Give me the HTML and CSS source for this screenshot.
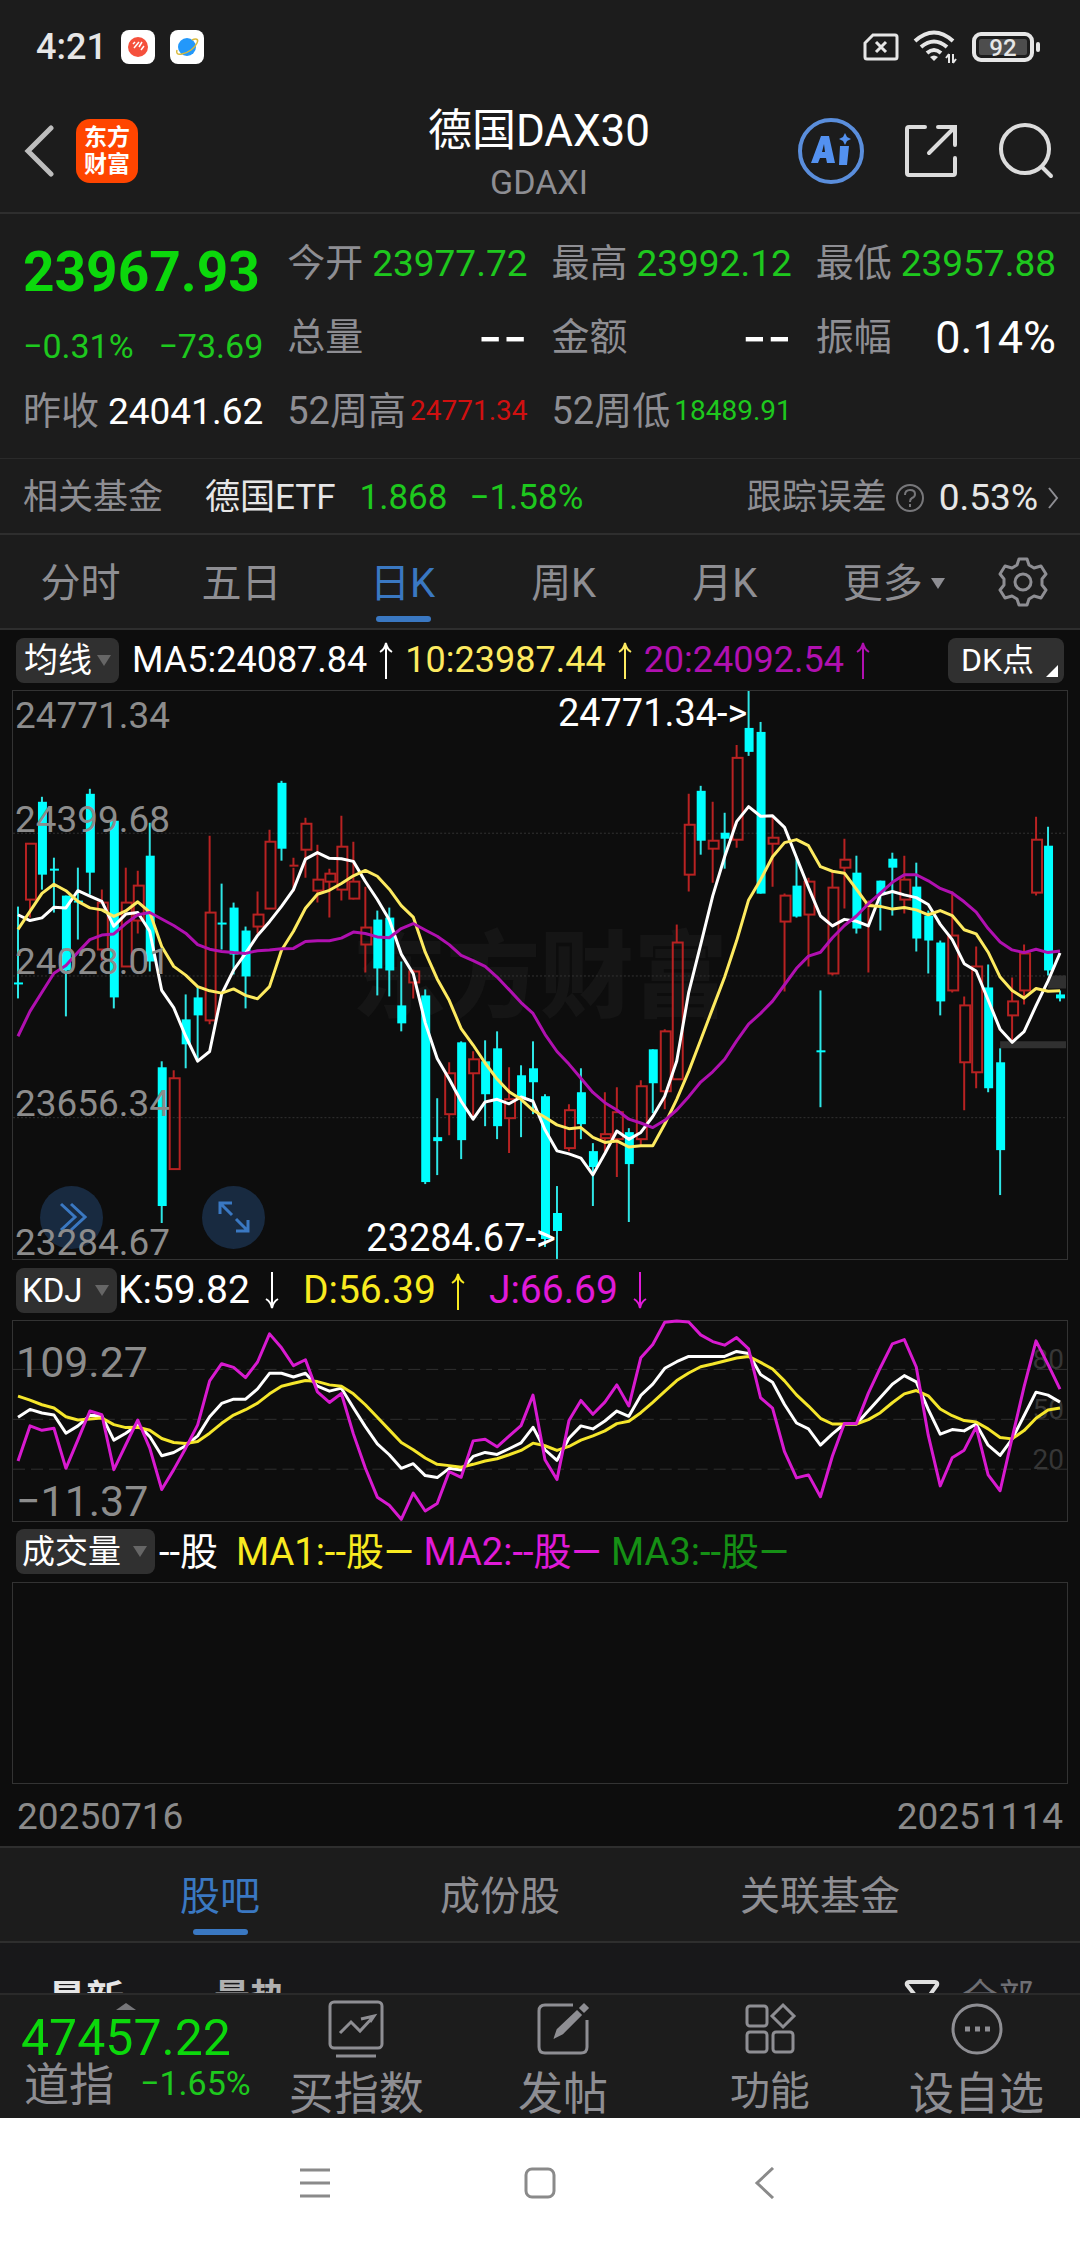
FILE: index.html
```html
<!DOCTYPE html>
<html lang="zh-CN">
<head>
<meta charset="utf-8">
<meta name="viewport" content="width=device-width">
<title>德国DAX30</title>
<link rel="stylesheet" href="styles.css">
<script src="chart.js" defer></script>
</head>
<body>
<!-- 状态栏 -->
<div class="status">
	<span class="time">4:21</span>
	<svg class="app" width="34" height="34" viewBox="0 0 34 34"><rect width="34" height="34" rx="8" fill="#fff"/><circle cx="17" cy="17" r="10" fill="#f5503c"/><path d="M12 14l2-2M13 18l5-6M18 17l3-5M20 20l3-4" fill="none" stroke="#fff" stroke-width="1.5"/></svg>
	<svg class="app" width="34" height="34" viewBox="0 0 34 34"><rect width="34" height="34" rx="8" fill="#fff"/><circle cx="17" cy="17" r="9" fill="#2398fa"/><path d="M22 10c4-2 7-1 5 3-2 5-9 10-15 11-5 1-6-1-5-4" fill="none" stroke="#d8b93c" stroke-width="1.5"/></svg>
	<span class="grow"></span>
	<svg width="36" height="28" viewBox="0 0 36 28" fill="none" stroke="#e6e6e6" stroke-width="3"><path d="M10 2h22q2 0 2 2v20q0 2-2 2H4q-2 0-2-2V10z"/><path d="M13 9l10 10M23 9L13 19"/></svg>
	<svg width="44" height="34" viewBox="0 0 44 34" fill="none" stroke="#e6e6e6" stroke-width="4"><path d="M2 11q19-17 38 0M8 17q13-11 26 0M14 23q7-6 14 0"/><path d="M17 27q4-3 8 0l-4 4z" fill="#e6e6e6" stroke="none"/><path d="M36 24v9M33 28l3-4M40 24v9M43 29l-3 4" stroke-width="2"/></svg>
	<span class="battery">92</span>
</div>
<!-- 标题栏 -->
<header class="head">
	<div class="head-side">
		<button class="ico" aria-label="返回"><svg width="30" height="52" viewBox="0 0 30 52" fill="none" stroke="#bdbdbd" stroke-width="5" stroke-linecap="round"><path d="M27 3L4 26l23 23"/></svg></button>
		<a class="logo" href="#">东方<br>财富</a>
	</div>
	<div class="head-title">
		<h1>德国DAX30</h1>
		<p>GDAXI</p>
	</div>
	<div class="head-side head-right">
		<button class="ico" aria-label="Ai"><svg width="66" height="66" viewBox="0 0 66 66"><circle cx="33" cy="33" r="31" fill="none" stroke="#5a8edc" stroke-width="4"/><path d="M13 45L23 18h8l6 27h-8l-1-5h-6l-2 5zM24 34h3l-1-8zM42 28h9l-2 19h-8zM47 15l2 4 4 2-4 2-2 4-2-4-4-2 4-2z" fill="#5391f0" fill-rule="evenodd"/></svg></button>
		<button class="ico" aria-label="分享"><svg width="54" height="54" viewBox="0 0 54 54" fill="none" stroke="#dcdcdc" stroke-width="4" stroke-linecap="round"><path d="M21 3H5q-2 0-2 2v44q0 2 2 2h44q2 0 2-2V34M34 3h17v18M50 4L25 29"/></svg></button>
		<button class="ico" aria-label="搜索"><svg width="56" height="56" viewBox="0 0 56 56" fill="none" stroke="#dcdcdc" stroke-width="4" stroke-linecap="round"><circle cx="27" cy="26" r="24"/><path d="M44 44l9 9"/></svg></button>
	</div>
</header>
<!-- 行情 -->
<section class="quote">
	<div class="price"><b>23967.93</b></div>
	<div><span>今开</span><i class="down">23977.72</i></div>
	<div><span>最高</span><i class="down">23992.12</i></div>
	<div><span>最低</span><i class="down">23957.88</i></div>
	<div class="change"><em>−0.31%</em><em>−73.69</em></div>
	<div><span>总量</span><i class="none">--</i></div>
	<div><span>金额</span><i class="none">--</i></div>
	<div><span>振幅</span><i class="big">0.14%</i></div>
	<div><span>昨收</span><i>24041.62</i></div>
	<div><span>52周高</span><i class="small up">24771.34</i></div>
	<div><span>52周低</span><i class="small down">18489.91</i></div>
</section>
<a class="fund" href="#">
	<span class="gray">相关基金</span>
	<span class="fund-name">德国ETF</span>
	<span class="down fund-price">1.868</span>
	<span class="down">−1.58%</span>
	<span class="grow"></span>
	<span class="gray">跟踪误差</span>
	<svg class="help" width="30" height="30" viewBox="0 0 30 30" fill="none" stroke="#77777a" stroke-width="2"><circle cx="15" cy="15" r="13"/><path d="M10 12q0-5 5-5t5 4q0 3-3 4-2 1-2 4M15 21v3"/></svg>
	<span class="fund-diff">0.53%</span>
	<svg width="14" height="22" viewBox="0 0 14 22" fill="none" stroke="#8e8e93" stroke-width="2"><path d="M3 1l8 10-8 10"/></svg>
</a>
<nav class="tabs">
	<button>分时</button>
	<button>五日</button>
	<button class="on">日K</button>
	<button>周K</button>
	<button>月K</button>
	<button class="more">更多<small class="caret"></small></button>
	<button class="gear" aria-label="设置"><svg width="50" height="50" viewBox="0 0 50 50" fill="none" stroke="#8e8e93" stroke-width="3" stroke-linejoin="round"><path d="M21 2h8l2 6 5 3 7-2 5 8-4 5v6l4 5-5 8-7-2-5 3-2 6h-8l-2-6-5-3-7 2-5-8 4-5v-6l-4-5 5-8 7 2 5-3z"/><circle cx="25" cy="25" r="8"/></svg></button>
</nav>
<!-- 图表 -->
<main class="charts">
	<div class="legend">
		<button class="pick">均线<small class="caret"></small></button>
		<span class="ma5">MA5:24087.84<svg class="arrow" viewBox="0 0 16 38"><path d="M8 38V2M2 11q5-3 6-9 1 6 6 9"/></svg></span>
		<span class="ma10">10:23987.44<svg class="arrow" viewBox="0 0 16 38"><path d="M8 38V2M2 11q5-3 6-9 1 6 6 9"/></svg></span>
		<span class="ma20">20:24092.54<svg class="arrow" viewBox="0 0 16 38"><path d="M8 38V2M2 11q5-3 6-9 1 6 6 9"/></svg></span>
		<span class="grow"></span>
		<button class="pick dk">DK点</button>
	</div>
	<div class="frame">
		<button class="round next" aria-label="展开"><svg width="30" height="30" viewBox="0 0 30 30"><path d="M4 2l14 13L4 28M14 2l14 13-14 13"/></svg></button>
		<button class="round full" aria-label="全屏"><svg width="34" height="34" viewBox="0 0 34 34"><path d="M3 14V3h12M3 3l12 12M31 20v11H19M31 31L19 19"/></svg></button>
		<svg id="kline" viewBox="0 0 1056 569">
			<text class="mark" x="528" y="320">东方财富</text>
			<path class="dots" d="M0 142.500H1056M0 285.500H1056M0 427.500H1056"/>
			<path class="gap" d="M989 351h66v7h-66zM1037 285h18v13h-18z"/>
			<g id="bars"></g>
			<text class="axis" x="2" y="37">24771.34</text>
			<text class="axis" x="2" y="141">24399.68</text>
			<text class="axis" x="2" y="284">24028.01</text>
			<text class="axis" x="2" y="426">23656.34</text>
			<text class="axis" x="2" y="565">23284.67</text>
			<text class="tip" x="546" y="35">24771.34-&gt;</text>
			<text class="tip" x="354" y="561">23284.67-&gt;</text>
		</svg>
	</div>
	<div class="legend kdj-legend">
		<button class="pick">KDJ<small class="caret"></small></button>
		<span class="k">K:59.82<svg class="arrow" viewBox="0 0 16 38"><path d="M8 0v36M2 27q5 3 6 9 1-6 6-9"/></svg></span>
		<span class="d">D:56.39<svg class="arrow" viewBox="0 0 16 38"><path d="M8 38V2M2 11q5-3 6-9 1 6 6 9"/></svg></span>
		<span class="j">J:66.69<svg class="arrow" viewBox="0 0 16 38"><path d="M8 0v36M2 27q5 3 6 9 1-6 6-9"/></svg></span>
	</div>
	<div class="frame">
		<svg id="kdj" viewBox="0 0 1056 200">
			<path class="dash" d="M0 48.500H1056M0 98.500H1056M0 148.500H1056"/>
			<text class="axis kdj-axis" x="3" y="56">109.27</text>
			<text class="axis kdj-axis" x="3" y="195">−11.37</text>
			<text class="level" x="1053" y="48">80</text>
			<text class="level" x="1053" y="98">50</text>
			<text class="level" x="1053" y="148">20</text>
		</svg>
	</div>
	<div class="legend vol-legend">
		<button class="pick">成交量<small class="caret"></small></button>
		<span class="vol">--股</span>
		<span class="d">MA1:--股—</span>
		<span class="j">MA2:--股—</span>
		<span class="m3">MA3:--股—</span>
	</div>
	<div class="frame volume"></div>
	<div class="dates"><time>20250716</time><time>20251114</time></div>
</main>
<nav class="subtabs">
	<button class="on">股吧</button>
	<button>成份股</button>
	<button>关联基金</button>
</nav>
<div class="posts">
	<b>最新</b>
	<b class="hot">最热</b>
	<span class="grow"></span>
	<svg width="36" height="36" viewBox="0 0 36 36" fill="none" stroke="#e0e0e0" stroke-width="4"><path d="M5 2h26q3 0 2 3L23 19v14l-9-4V19L3 5q-1-3 2-3z"/></svg>
	<span class="all">全部</span>
</div>
<!-- 底部工具栏 -->
<footer class="toolbar">
	<a class="dow" href="#">
		<small class="caret caret-up"></small>
		<strong>47457.22</strong>
		<div><span>道指</span><em>−1.65%</em></div>
	</a>
	<button><svg viewBox="0 0 58 58"><rect x="3" y="2" width="52" height="46" rx="4"/><path d="M9 56h40M13 33l11-11 9 9 14-15M34 19l13-3-4 6"/></svg>买指数</button>
	<button><svg viewBox="0 0 58 58"><path d="M39 5H11q-6 0-6 6v36q0 6 6 6h36q6 0 6-6V20"/><path d="M22 36l2-6L43 12l3 3-18 18zM47 8l3-3 3 3-3 3z" fill="#8e8e93"/></svg>发帖</button>
	<button class="fn"><svg viewBox="0 0 58 58"><rect x="6" y="6" width="20" height="20" rx="3"/><rect x="6" y="32" width="20" height="20" rx="3"/><rect x="32" y="32" width="20" height="20" rx="3"/><path d="M42 5l11 11-11 11-11-11z"/></svg>功能</button>
	<button><svg viewBox="0 0 58 58"><circle cx="29" cy="29" r="24"/><path d="M17 29h5M27 29h5M37 29h5" stroke-width="5"/></svg>设自选</button>
</footer>
<!-- 系统导航 -->
<nav class="sysnav">
	<button aria-label="菜单"><svg width="32" height="32" viewBox="0 0 32 32"><path d="M1 3h30M1 16h30M1 29h30"/></svg></button>
	<button aria-label="主页"><svg width="32" height="32" viewBox="0 0 32 32"><rect x="2" y="2" width="28" height="28" rx="6"/></svg></button>
	<button aria-label="后退"><svg width="32" height="32" viewBox="0 0 32 32"><path d="M24 1L8 16l16 15"/></svg></button>
</nav>
</body>
</html>
```
FILE: chart.js
```js
//K线数据: 涨跌,最高,实体上,实体下,最低 (纵向刻度26-1513)
var bars=[
	['d',590,788,788,830],['u',425,425,572,620],['d',304,315,508,545],['d',463,490,490,606],
	['d',562,562,757,878],['d',488,575,575,677],['d',283,295,502,560],['u',546,580,702,732],
	['d',353,367,827,857],['u',489,580,748,748],['u',497,535,628,660],['d',370,458,733,760],
	['d',996,1012,1374,1418],['u',1018,1040,1278,1278],['d',820,885,952,1014],['d',800,827,875,990],
	['u',406,605,888,898],['d',530,633,633,702],['d',580,592,715,768],['d',643,652,773,858],
	['u',550,612,643,660],['u',390,420,595,595],['d',262,267,438,470],['u',462,484,484,550],
	['u',358,374,442,515],['u',429,520,548,580],['u',492,504,525,618],['u',353,434,545,575],
	['u',421,525,570,573],['u',537,646,690,762],['d',600,625,753,822],['d',592,618,758,826],
	['d',735,850,896,916],['u',755,760,788,830],['d',808,823,1312,1316],['d',1093,1193,1204,1294],
	['u',999,1028,1135,1188],['d',943,947,1201,1252],['u',969,990,1028,1140],['d',940,996,1081,1166],
	['d',916,962,1166,1200],['u',1012,1095,1145,1236],['d',1006,1032,1095,1194],['d',943,1014,1050,1135],
	['d',1083,1087,1460,1482],['d',1323,1393,1440,1513],['u',1109,1124,1224,1232],['d',1015,1077,1160,1200],
	['d',1211,1232,1272,1375],['u',1077,1186,1196,1230],['u',1063,1130,1200,1300],['d',1171,1180,1265,1415],
	['u',1045,1060,1200,1215],['d',963,963,1053,1132],['u',912,918,1075,1122],['u',637,685,1043,1043],
	['u',296,376,506,550],['d',274,287,419,455],['u',315,419,440,528],['d',345,398,412,490],
	['u',167,200,416,437],['d',26,123,186,195],['d',107,133,557,557],['u',350,409,426,537],
	['u',557,561,630,812],['d',460,535,617,619],['u',516,525,611,746],['d',811,968,968,1115],
	['u',500,540,765,771],['u',414,467,488,597],['d',456,502,647,660],['u',575,586,586,763],
	['d',522,522,560,653],['d',449,465,489,613],['u',458,520,572,610],['d',476,538,673,708],
	['d',600,615,679,765],['d',680,685,840,875],['u',550,666,811,815],['u',825,850,998,1124],
	['u',696,748,1025,1066],['d',741,803,1065,1077],['d',962,997,1228,1346],['u',776,838,875,943],
	['u',690,713,810,847],['u',356,416,553,563],['d',382,431,757,770],['d',809,821,831,840]
];
//均线
var ma5=[612,627,620,592,594,549,563,577,642,610,606,655,810,855,930,995,970,820,757,713,666,630,590,546,466,449,464,465,472,525,572,625,715,766,895,988,1042,1100,1147,1102,1095,1107,1089,1100,1175,1230,1238,1249,1293,1237,1178,1200,1182,1140,1087,995,815,690,563,460,368,329,354,353,383,462,540,615,641,624,629,641,560,551,560,567,585,637,677,740,759,835,912,946,918,850,785,712];
var ma10=[650,603,556,532,549,577,594,599,616,602,578,605,695,747,770,800,811,817,806,823,832,800,705,655,595,558,548,530,510,496,511,545,588,618,710,780,836,910,953,1000,1042,1075,1095,1124,1142,1162,1172,1169,1195,1208,1204,1220,1217,1217,1160,1095,1022,940,857,775,680,573,520,460,423,415,431,486,498,503,545,588,590,597,593,599,612,601,614,651,662,710,775,810,830,805,812,811];
var ma20=[930,865,815,765,745,710,677,665,662,635,612,606,623,640,660,690,702,708,711,713,706,704,701,700,682,680,680,673,657,661,670,672,648,635,652,668,690,718,732,747,775,808,842,870,925,970,1003,1040,1077,1104,1123,1147,1157,1169,1150,1123,1088,1050,1023,990,942,898,870,838,795,752,720,710,672,640,615,583,555,527,507,507,523,543,555,578,605,648,683,704,711,702,711,707];
//KDJ (纵向刻度211-814)
var k=[502,478,489,495,550,528,496,498,571,550,524,560,618,608,588,558,500,460,447,447,416,369,369,380,369,408,423,414,473,530,582,615,656,642,678,684,656,661,620,608,614,597,579,532,600,632,565,528,537,513,483,499,436,402,354,334,318,318,318,318,303,309,373,396,463,519,537,586,552,522,522,482,442,402,376,395,478,553,539,543,522,586,617,568,497,426,435,456];
var d=[438,450,464,474,500,510,507,504,524,533,532,541,566,578,581,575,550,520,495,479,459,431,408,399,391,394,404,408,431,464,502,540,578,600,625,644,648,653,644,634,627,615,602,580,588,602,590,571,558,543,521,514,488,457,424,391,368,349,341,332,323,318,336,356,392,434,468,505,522,522,522,509,488,458,431,421,437,477,497,512,516,537,563,567,542,505,480,474];
var j=[634,528,541,535,656,570,483,494,660,585,510,595,720,660,595,525,392,340,351,382,335,250,292,346,328,425,457,430,552,655,743,768,810,731,785,762,666,683,573,568,591,559,527,435,630,690,512,451,493,456,404,468,322,282,215,211,214,253,273,284,261,295,443,474,606,685,676,742,619,521,521,429,352,280,267,350,556,709,624,601,531,676,724,565,410,271,342,417];

var NS='http://www.w3.org/2000/svg';
function add(parent,tag,attrs){
	var el=document.createElementNS(NS,tag);
	for(var a in attrs){
		el.setAttribute(a,attrs[a]);
	}
	parent.appendChild(el);
}
function px(i){
	return 5+i*12;
}
function drawLine(parent,data,cls,top,bottom,h){
	var pts=[];
	for(var i=0;i<data.length;i++){
		pts.push(px(i)+','+Math.round((data[i]-top)/(bottom-top)*h*10)/10);
	}
	add(parent,'polyline',{'points':pts.join(' '),'class':cls});
}
function ky(v){
	return Math.round((v-26)/1487*569);
}
var g=document.getElementById('bars');
for(var i=0;i<bars.length;i++){
	var b=bars[i],x=px(i),t=ky(b[2]),e=Math.max(ky(b[3]),t+2);
	if(b[0]=='d'){
		add(g,'path',{'class':'fall','d':'M'+x+' '+ky(b[1])+'V'+ky(b[4])});
		add(g,'rect',{'class':'fall-body','x':x-4,'y':t,'width':9,'height':e-t});
	}else{
		//阳线空心
		add(g,'path',{'class':'rise','d':'M'+x+' '+ky(b[1])+'V'+t+'M'+x+' '+e+'V'+ky(b[4])});
		if(b[2]==b[3]){
			add(g,'path',{'class':'rise','d':'M'+(x-4)+' '+t+'h9'});
		}else{
			add(g,'rect',{'class':'rise','x':x-4,'y':t,'width':10,'height':e-t});
		}
	}
}
drawLine(g,ma5,'line-w',26,1513,569);
drawLine(g,ma10,'line-y',26,1513,569);
drawLine(g,ma20,'line-p',26,1513,569);
var kdj=document.getElementById('kdj');
drawLine(kdj,k,'line-w',211,814,200);
drawLine(kdj,d,'line-y2',211,814,200);
drawLine(kdj,j,'line-j',211,814,200);
```
FILE: styles.css
```css
*{margin:0;padding:0;box-sizing:border-box;}
body{background:#1c1c1c;color:#fff;font-family:Roboto,"Noto Sans CJK SC",sans-serif;font-size:36px;line-height:1;}
button{border:0;background:none;color:inherit;font:inherit;}
a{color:inherit;text-decoration:none;}
i,em{font-style:normal;}
svg{display:block;flex:none;}
.grow{flex:1;}
.gray{color:#8e8e93;}
.down{color:#1ec81e !important;}
.up{color:#d01010 !important;}
.caret{display:inline-block;flex:none;border:7px solid transparent;border-top:11px solid #8e8e93;border-bottom:0;}

.status{display:flex;align-items:center;height:94px;padding:0 46px 0 36px;}
.time{font-size:36px;font-weight:500;color:#e6e6e6;margin-right:14px;}
.status .app{margin-right:15px;}
.status svg+svg{margin-right:15px;}
.status .grow+svg{margin-right:14px;}
.battery{position:relative;width:62px;height:30px;border:4px solid #e6e6e6;border-radius:9px;background:#4d4d4d;box-shadow:inset 0 0 0 3px #1c1c1c;font-size:24px;line-height:24px;font-weight:500;text-align:center;color:#e6e6e6;}
.battery:after{content:"";position:absolute;right:-10px;top:6px;width:4px;height:10px;border-radius:2px;background:#e6e6e6;}

.head{display:grid;grid-template-columns:1fr auto 1fr;height:120px;padding:0 26px 0 24px;border-bottom:2px solid #2e2e2e;}
.head-side{display:flex;align-items:center;gap:22px;padding-bottom:4px;}
.head-right{justify-content:flex-end;gap:40px;}
.logo{width:62px;height:64px;padding-top:5px;border-radius:14px;background:#ff4500;font-size:23px;line-height:27px;font-weight:700;text-align:center;}
.head-title{text-align:center;padding-top:12px;}
.head h1{font-size:44px;line-height:50px;font-weight:400;}
.head p{font-size:34px;line-height:52px;color:#8e8e93;}

.quote{display:grid;grid-template-columns:repeat(4,1fr);grid-auto-rows:74px;column-gap:24px;padding:12px 24px 10px 23px;border-bottom:1px solid #2a2a2a;}
.quote div{display:flex;align-items:center;justify-content:space-between;white-space:nowrap;}
.quote span{font-size:38px;color:#8e8e93;}
.quote i{font-size:37px;}
.quote .big{font-size:45px;}
.quote .none{font-family:Inter,sans-serif;font-size:54px;}
.quote .small{font-size:28px;}
.quote b{font-size:55px;font-weight:700;color:#0cd80c;}
.quote .price,.quote .change{padding-top:18px;}
.quote em{font-size:34px;color:#1ec81e;}

.fund{display:flex;align-items:center;height:76px;padding:3px 20px 0 23px;border-bottom:2px solid #2e2e2e;font-size:35px;color:#e6e6e6;}
.fund-name{margin:0 24px 0 42px;}
.fund-price{margin-right:22px;}
.fund-diff{margin-right:8px;font-size:37px;}
.help{margin:0 14px 0 8px;}

.tabs{display:grid;grid-template-columns:repeat(6,17fr) 12fr;height:95px;border-bottom:2px solid #2e2e2e;}
.tabs button,.subtabs button{position:relative;padding-top:5px;font-size:40px;color:#8e8e93;}
.tabs .more{padding-left:16px;}
.tabs .caret{margin:0 0 8px 8px;}
.tabs .on,.subtabs .on{color:#3a78c2;}
.on:after{content:"";position:absolute;left:50%;bottom:6px;width:55px;height:6px;margin-left:-27px;border-radius:3px;background:#3a78c2;}
.tabs .gear{display:flex;align-items:center;justify-content:center;padding-top:0;}

.charts{background:#0d0d0d;padding:0 12px;border-bottom:2px solid #2e2e2e;}
.legend{display:flex;align-items:center;height:60px;padding:0 4px;font-size:36px;white-space:nowrap;}
.legend span{display:flex;align-items:center;}
.pick{display:flex;align-items:center;width:103px;height:45px;padding:0 8px;border-radius:8px;background:#303030;font-size:34px;}
.pick .caret{border-top-color:#666;margin-left:auto;}
.arrow{width:16px;height:38px;margin:0 11px;fill:none;stroke:currentColor;stroke-width:2;}
.ma5{margin-left:13px;}
.ma10{color:#fdea60;}
.ma20{color:#b010b0;}
.dk{position:relative;width:116px;padding-left:13px;font-size:32px;}
.dk:after{content:"";position:absolute;right:6px;bottom:6px;border:6px solid #fff;border-top-color:transparent;border-left-color:transparent;}
.frame{position:relative;border:1px solid #333;}
.frame>svg{position:relative;width:100%;height:auto;overflow:visible;pointer-events:none;}
.volume{height:202px;}
.round{position:absolute;bottom:10px;display:flex;align-items:center;justify-content:center;width:63px;height:63px;border-radius:50%;background:#182a40;}
.round path{fill:none;stroke:#3a78c2;stroke-width:3;}
.next{left:27px;}
.full{left:189px;}
.mark{font-size:94px;font-weight:900;fill:#151515;text-anchor:middle;}
.dots{stroke:#333;stroke-dasharray:2 2;}
.dash{stroke:#303030;stroke-dasharray:12 6;}
.gap{fill:#303030;}
.axis{font-size:37px;fill:#8c8c8c;}
.tip{font-size:38px;fill:#fff;}
.kdj-axis{font-size:43px;}
.level{font-size:28px;fill:#363636;text-anchor:end;}
.fall{stroke:#2ee6e6;stroke-width:2;}
.fall-body{fill:#00ffff;}
.rise{fill:none;stroke:#b82222;stroke-width:2;}
.line-w,.line-y,.line-y2,.line-p,.line-j{fill:none;stroke:#fff;stroke-width:3;stroke-linejoin:round;}
.line-y{stroke:#fdea60;}
.line-y2{stroke:#f5e62b;}
.line-p{stroke:#b010b0;}
.line-j{stroke:#d81ad0;}

.kdj-legend{padding-top:2px;font-size:39px;}
.kdj-legend .pick{width:101px;margin-right:1px;font-size:33px;padding-left:6px;}
.kdj-legend .arrow{margin:0 23px 0 14px;}
.k{color:#fff;}
.d{color:#f8ea20;}
.j{color:#e01ad8;}
.m3{color:#159015;}
.vol-legend{gap:10px;font-size:38px;}
.vol-legend .pick{width:139px;margin-right:-6px;padding-left:6px;font-size:33px;}
.vol{margin-right:8px;}
.dates{display:flex;justify-content:space-between;padding:14px 5px 10px 5px;font-size:37px;line-height:38px;color:#8a8a8a;}

.subtabs{display:flex;justify-content:space-evenly;height:95px;border-bottom:2px solid #2e2e2e;}
.posts{display:flex;align-items:flex-start;height:50px;padding:37px 46px 0 48px;overflow:hidden;background:#18181a;font-size:38px;color:#e6e6e6;}
.hot{margin-left:90px;font-size:36px;color:#b0b0b0;}
.all{margin-left:22px;font-size:36px;color:#6e6e73;}
.toolbar{display:grid;grid-template-columns:253px repeat(4,1fr);height:125px;overflow:hidden;border-top:2px solid #2a2a2a;color:#8e8e93;font-size:45px;}
.toolbar button{display:flex;flex-direction:column;align-items:center;line-height:46px;padding-top:5px;gap:14px;white-space:nowrap;}
.toolbar .fn{gap:12px;font-size:40px;line-height:44px;}
.toolbar svg{width:58px;height:58px;fill:none;stroke:#8e8e93;stroke-width:3;}
.dow{position:relative;padding:18px 0 0 21px;}
.caret-up{position:absolute;left:116px;top:8px;border:10px solid transparent;border-top:0;border-bottom:7px solid #77777a;}
.dow strong{display:block;font-size:50px;line-height:50px;font-weight:400;color:#0cd80c;}
.dow div{display:flex;gap:26px;line-height:46px;padding-left:3px;}
.dow em{font-size:34px;line-height:40px;color:#1ec81e;}
.sysnav{display:flex;justify-content:center;gap:193px;height:130px;background:#fff;}
.sysnav path,.sysnav rect{fill:none;stroke:#8a8a8a;stroke-width:3;}
```
